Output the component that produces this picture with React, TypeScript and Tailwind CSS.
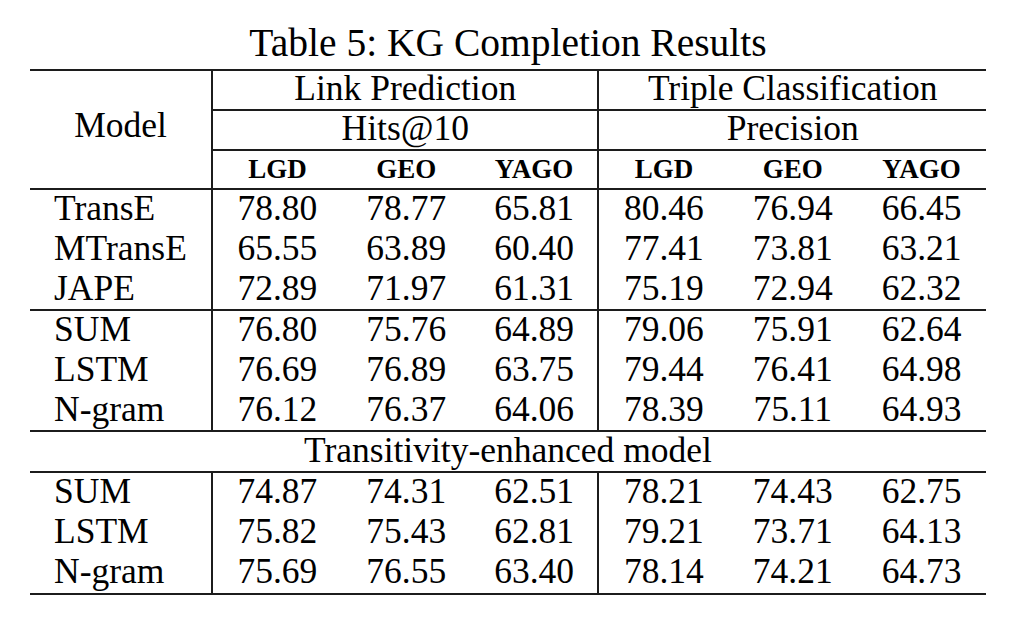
const groups = [
  [
    ["TransE", "78.80", "78.77", "65.81", "80.46", "76.94", "66.45"],
    ["MTransE", "65.55", "63.89", "60.40", "77.41", "73.81", "63.21"],
    ["JAPE", "72.89", "71.97", "61.31", "75.19", "72.94", "62.32"],
  ],
  [
    ["SUM", "76.80", "75.76", "64.89", "79.06", "75.91", "62.64"],
    ["LSTM", "76.69", "76.89", "63.75", "79.44", "76.41", "64.98"],
    ["N-gram", "76.12", "76.37", "64.06", "78.39", "75.11", "64.93"],
  ],
];

const transRows = [
  ["SUM", "74.87", "74.31", "62.51", "78.21", "74.43", "62.75"],
  ["LSTM", "75.82", "75.43", "62.81", "79.21", "73.71", "64.13"],
  ["N-gram", "75.69", "76.55", "63.40", "78.14", "74.21", "64.73"],
];

const cols = "grid grid-cols-[183px_repeat(6,minmax(0,1fr))]";
const line = "border-[#1c1c1c]";

// heights: each block of three rows must add up to ~119-120px
function Row({ row, short }: { row: string[]; short?: boolean }) {
  const h = short ? "h-[39px] leading-[36px]" : "h-[40px] leading-[37px]";
  return (
    <div className={`${cols} ${h}`}>
      <div className={`pl-[24px] border-r-2 ${line}`}>{row[0]}</div>
      {row.slice(1).map((v, i) => (
        <div key={i} className={i === 2 ? `text-center border-r-2 ${line}` : "text-center"}>
          {v}
        </div>
      ))}
    </div>
  );
}

export default function App() {
  return (
    <div className="min-h-[622px] w-[1018px] bg-white pl-[30px] pt-[20px] text-black [font-family:Liberation_Serif]">
      <div className="w-[956px] text-center text-[39.5px] leading-[46px]">Table 5: KG Completion Results</div>

      <div className={`mt-[3px] w-[956px] border-y-2 ${line} text-[35.5px]`}>
        {/* header */}
        <div className={`${cols} grid-rows-[40px_40px_37px]`}>
          <div className={`row-span-3 flex items-center justify-center pb-[8px] border-r-2 ${line}`}>Model</div>
          <div className={`col-span-3 text-center leading-[35px] border-r-2 border-b-2 ${line}`}>Link Prediction</div>
          <div className={`col-span-3 text-center leading-[35px] border-b-2 ${line}`}>Triple Classification</div>
          <div className={`col-span-3 text-center leading-[35px] border-r-2 border-b-2 ${line}`}>Hits@10</div>
          <div className={`col-span-3 text-center leading-[35px] border-b-2 ${line}`}>Precision</div>
          <div className="text-center text-[27px] font-bold leading-[36px]">LGD</div>
          <div className="text-center text-[27px] font-bold leading-[36px]">GEO</div>
          <div className={`text-center text-[27px] font-bold leading-[36px] border-r-2 ${line}`}>YAGO</div>
          <div className="text-center text-[27px] font-bold leading-[36px]">LGD</div>
          <div className="text-center text-[27px] font-bold leading-[36px]">GEO</div>
          <div className="text-center text-[27px] font-bold leading-[36px]">YAGO</div>
        </div>

        {groups.map((g, gi) => (
          <div key={gi} className={`border-t-2 ${line}`}>
            {g.map((r, i) => (
              <Row key={i} row={r} short={i === 2} />
            ))}
          </div>
        ))}

        <div className={`border-t-2 ${line} h-[41px] text-center leading-[37px]`}>
          Transitivity-enhanced model
        </div>

        <div className={`border-t-2 ${line}`}>
          {transRows.map((r, i) => (
            <Row key={i} row={r} />
          ))}
        </div>
      </div>
    </div>
  );
}
